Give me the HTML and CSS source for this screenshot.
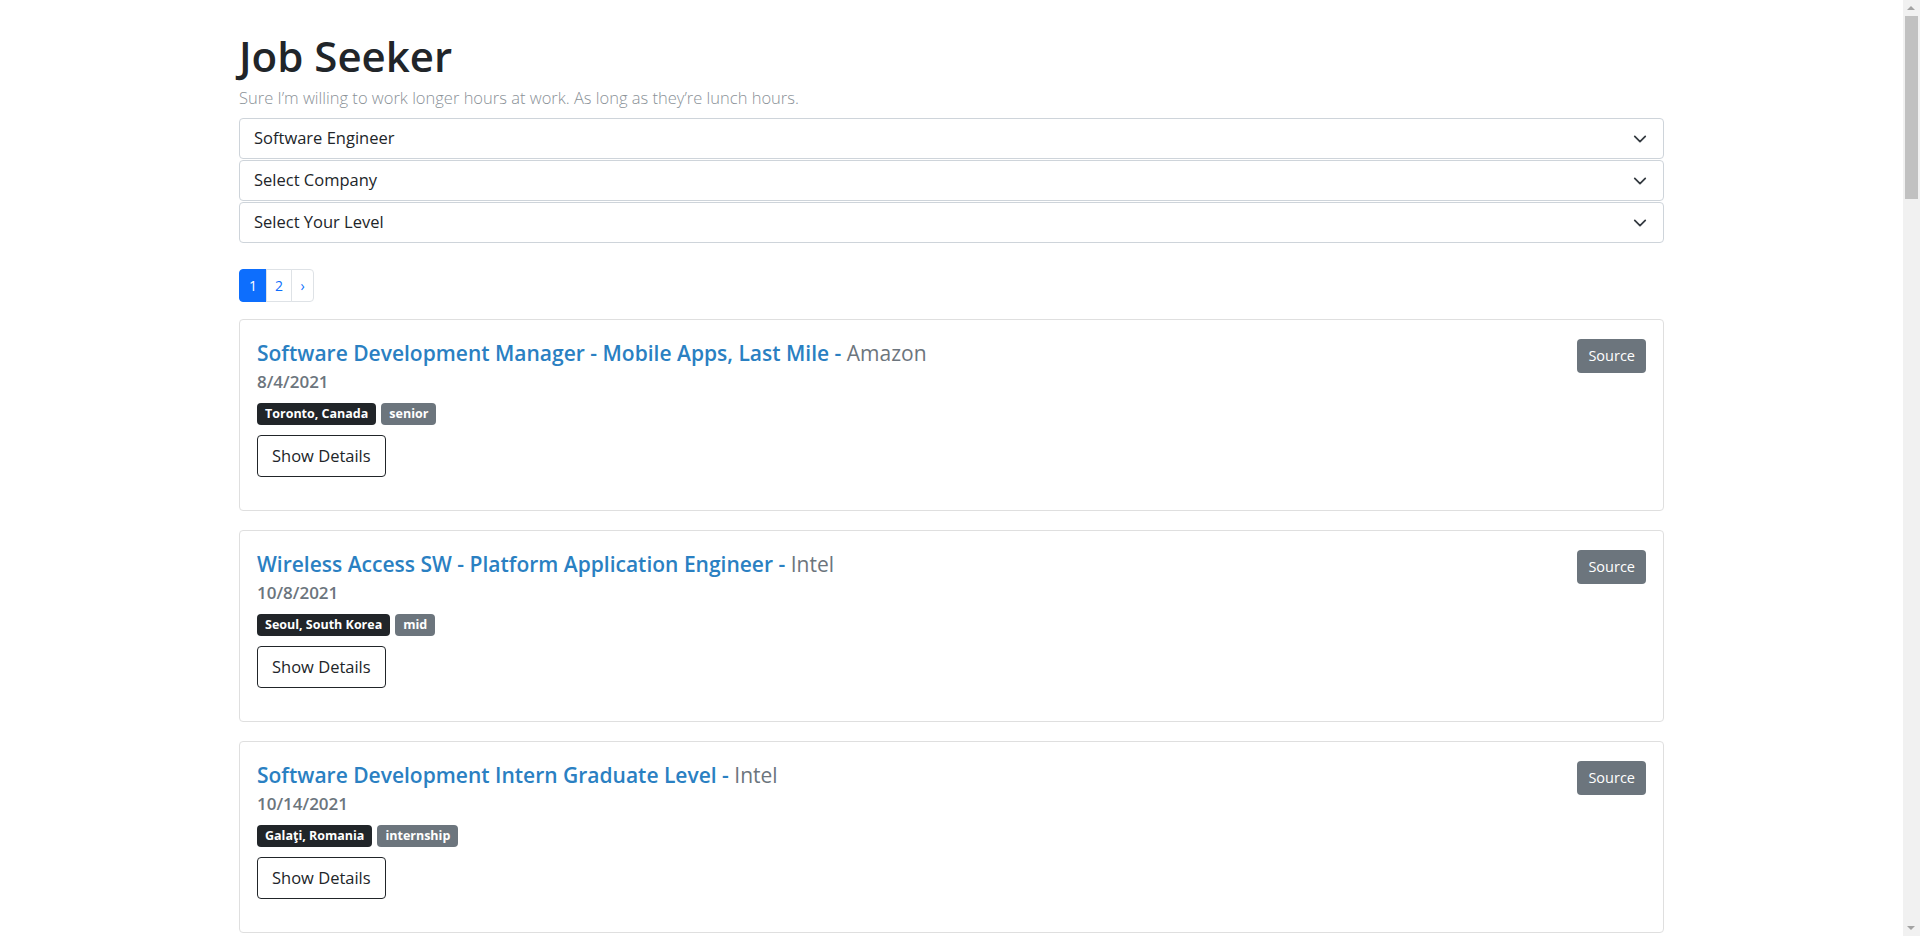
FILE: index.html
```html
<!DOCTYPE html>
<html lang="en">
<head>
<meta charset="utf-8">
<title>Job Seeker</title>
<link rel="stylesheet" href="styles.css">
</head>
<body>
<div class="page">
  <header class="intro">
    <h1 class="title">Job Seeker</h1>
    <p class="tagline">Sure I’m willing to work longer hours at work. As long as they’re lunch hours.</p>
  </header>

  <div class="filters">
    <div class="select"><span>Software Engineer</span><svg class="chev" viewBox="0 0 16 16" width="16" height="16"><path d="M2 5l6 6 6-6" fill="none" stroke="#343a40" stroke-width="2" stroke-linecap="round" stroke-linejoin="round"/></svg></div>
    <div class="select"><span>Select Company</span><svg class="chev" viewBox="0 0 16 16" width="16" height="16"><path d="M2 5l6 6 6-6" fill="none" stroke="#343a40" stroke-width="2" stroke-linecap="round" stroke-linejoin="round"/></svg></div>
    <div class="select"><span>Select Your Level</span><svg class="chev" viewBox="0 0 16 16" width="16" height="16"><path d="M2 5l6 6 6-6" fill="none" stroke="#343a40" stroke-width="2" stroke-linecap="round" stroke-linejoin="round"/></svg></div>
  </div>

  <nav class="pager">
    <span class="pg active">1</span>
    <span class="pg">2</span>
    <span class="pg">›</span>
  </nav>

  <div class="jobs">
    <article class="job-card">
      <div class="job-main">
        <h5 class="job-title"><span class="role">Software Development Manager - Mobile Apps, Last Mile - </span><span class="company">Amazon</span></h5>
        <div class="job-date">8/4/2021</div>
        <div class="badges"><span class="badge dark">Toronto, Canada</span><span class="badge gray">senior</span></div>
        <button class="btn-details">Show Details</button>
      </div>
      <button class="btn-source">Source</button>
    </article>

    <article class="job-card">
      <div class="job-main">
        <h5 class="job-title"><span class="role">Wireless Access SW - Platform Application Engineer - </span><span class="company">Intel</span></h5>
        <div class="job-date">10/8/2021</div>
        <div class="badges"><span class="badge dark">Seoul, South Korea</span><span class="badge gray">mid</span></div>
        <button class="btn-details">Show Details</button>
      </div>
      <button class="btn-source">Source</button>
    </article>

    <article class="job-card">
      <div class="job-main">
        <h5 class="job-title"><span class="role">Software Development Intern Graduate Level - </span><span class="company">Intel</span></h5>
        <div class="job-date">10/14/2021</div>
        <div class="badges"><span class="badge dark">Galaţi, Romania</span><span class="badge gray">internship</span></div>
        <button class="btn-details">Show Details</button>
      </div>
      <button class="btn-source">Source</button>
    </article>
  </div>
</div>

<div class="scrollbar" aria-hidden="true">
  <span class="sb-arrow up"></span>
  <span class="sb-thumb"></span>
  <span class="sb-arrow down"></span>
</div>
</body>
</html>
```

FILE: styles.css
```css
body {
  margin: 0;
  padding-right: 17px;
  font-family: "Open Sans", "Noto Sans", sans-serif;
  font-size: 16px;
  line-height: 1.5;
  color: #212529;
  background: #fff;
}
.page {
  width: 1425px;
  margin: 0 auto;
  padding-top: 31px;
  padding-bottom: 40px;
}
.title {
  margin: 0;
  font-size: 42px;
  font-weight: 600;
  line-height: 1.2;
  color: #212529;
}
.tagline {
  margin: 4.5px 0 7.5px;
  font-size: 16.5px;
  font-weight: 300;
  color: #8a9197;
  line-height: 1.5;
}
.filters {
  display: flex;
  flex-direction: column;
  gap: 1px;
}
.select {
  display: flex;
  align-items: center;
  justify-content: space-between;
  height: 41px;
  box-sizing: border-box;
  padding: 0 16px 0 14px;
  border: 1px solid #ced4da;
  border-radius: 4px;
  font-size: 16.5px;
  color: #212529;
}
.chev { width: 14px; height: 14px; }
.pager {
  display: flex;
  margin-top: 26px;
  margin-bottom: 17px;
}
.pg {
  display: flex;
  align-items: center;
  justify-content: center;
  height: 33px;
  box-sizing: border-box;
  min-width: 23px;
  padding: 0 8px;
  border: 1px solid #dee2e6;
  margin-left: -1px;
  font-size: 14px;
  color: #0d6efd;
  background: #fff;
}
.pg:first-child { margin-left: 0; border-radius: 4px 0 0 4px; width: 28px; }
.pg:last-child { border-radius: 0 4px 4px 0; }
.pg.active {
  background: #0d6efd;
  border-color: #0d6efd;
  color: #fff;
}
.jobs {
  display: flex;
  flex-direction: column;
  gap: 19px;
}
.job-card {
  display: flex;
  align-items: flex-start;
  justify-content: space-between;
  height: 192px;
  box-sizing: border-box;
  border: 1px solid #dfdfdf;
  border-radius: 4px;
  padding: 18.5px 17px 16px 17px;
}
.job-main { display: flex; flex-direction: column; align-items: flex-start; }
.job-title {
  margin: 0;
  font-size: 21px;
  font-weight: 600;
  line-height: 1.35;
}
.role { color: #2a80c2; }
.company { color: #6c757d; font-weight: 400; }
.job-date {
  margin-top: 3.4px;
  font-size: 17px;
  font-weight: 600;
  color: #6c757d;
  line-height: 1.4;
  margin-bottom: 9.3px;
}
.badges { display: flex; gap: 5px; margin-bottom: 9.5px; }
.badge {
  display: inline-flex;
  align-items: center;
  height: 22px;
  padding: 0 8px;
  border-radius: 4px;
  font-size: 12.5px;
  font-weight: 700;
  color: #fff;
}
.badge.dark { background: #212529; }
.badge.gray { background: #6c757d; }
.btn-details {
  font-family: inherit;
  height: 42px;
  padding: 0 14px;
  border: 1px solid #212529;
  border-radius: 4px;
  background: #fff;
  color: #212529;
  font-size: 16.5px;
}
.btn-source {
  font-family: inherit;
  margin-top: 0;
  height: 34px;
  padding: 0 11px;
  border: none;
  border-radius: 4px;
  background: #6c757d;
  color: #fff;
  font-size: 14.5px;
}
.scrollbar {
  position: fixed;
  top: 0;
  right: 0;
  bottom: 0;
  width: 17px;
  background: #f1f1f1;
}
.sb-thumb {
  position: absolute;
  top: 16px;
  left: 2px;
  right: 2px;
  height: 183px;
  background: #c1c1c1;
}
.sb-arrow {
  position: absolute;
  left: 4px;
  width: 0;
  height: 0;
  border-left: 4.5px solid transparent;
  border-right: 4.5px solid transparent;
}
.sb-arrow.up { top: 6px; border-bottom: 4px solid #a3a3a3; }
.sb-arrow.down { bottom: 6px; border-top: 4px solid #a3a3a3; }
```
